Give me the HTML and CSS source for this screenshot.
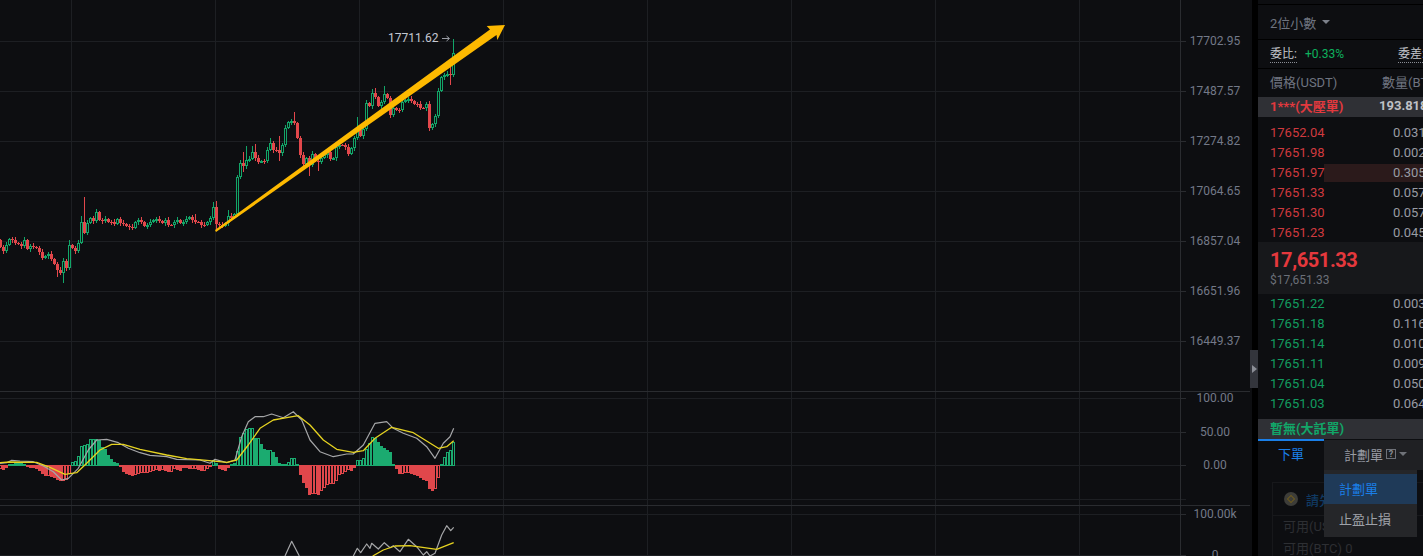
FILE: index.html
```html
<!DOCTYPE html>
<html lang="zh-Hant">
<head>
<meta charset="utf-8">
<title>BTC/USDT</title>
<link rel="stylesheet" href="styles.css">
</head>
<body>
<main class="terminal">
  <section class="chart-pane">
    <svg id="chart" class="chart" width="1252" height="556" viewBox="0 0 1252 556">
      <g id="grid"></g>
      <g id="candles"></g>
      <g id="macd"></g>
      <g id="lines"></g>
      <polygon class="trend" points="215,230 490,29.5 486.7,26 505,25 497.3,40 496.5,35 216,232"></polygon>
      <text class="peak" x="388" y="42">17711.62</text>
      <path class="peak-arrow" d="M442 38.500H449M446.500 36L449.500 38.500L446.500 41"></path>
      <g class="axis-labels">
        <text x="1215" y="45">17702.95</text>
        <text x="1215" y="95">17487.57</text>
        <text x="1215" y="145">17274.82</text>
        <text x="1215" y="195">17064.65</text>
        <text x="1215" y="245">16857.04</text>
        <text x="1215" y="295">16651.96</text>
        <text x="1215" y="345">16449.37</text>
        <text x="1215" y="402">100.00</text>
        <text x="1215" y="436">50.00</text>
        <text x="1215" y="469">0.00</text>
        <text x="1215" y="518">100.00k</text>
        <text x="1215" y="559">0</text>
      </g>
    </svg>
    <button class="collapse" type="button" aria-label="收合">
      <svg width="5" height="8" viewBox="0 0 5 8"><path class="collapse-glyph" d="M0 0L5 4L0 8Z"></path></svg>
    </button>
  </section>

  <aside class="book">
    <div class="strip"></div>
    <div class="precision">2位小數<span class="caret"></span></div>
    <div class="ratio">
      <span class="dotted">委比:</span><span class="ratio-value">+0.33%</span>
      <span class="dotted ratio-diff">委差:</span>
    </div>
    <div class="book-head"><span class="col-price">價格(USDT)</span><span class="col-qty-head">數量(BTC)</span></div>
    <div class="big-row"><span class="col-price big-ask">1***(大壓單)</span><span class="big-qty">193.8180</span></div>

    <div class="asks">
      <div class="row"><span class="col-price ask">17652.04</span><span class="col-qty">0.03120</span></div>
      <div class="row"><span class="col-price ask">17651.98</span><span class="col-qty">0.00250</span></div>
      <div class="row row-depth"><span class="col-price ask">17651.97</span><span class="col-qty">0.30540</span></div>
      <div class="row"><span class="col-price ask">17651.33</span><span class="col-qty">0.05700</span></div>
      <div class="row"><span class="col-price ask">17651.30</span><span class="col-qty">0.05710</span></div>
      <div class="row"><span class="col-price ask">17651.23</span><span class="col-qty">0.04530</span></div>
    </div>

    <div class="mid">
      <div class="mid-price">17,651.33</div>
      <div class="mid-usd">$17,651.33</div>
    </div>

    <div class="bids">
      <div class="row"><span class="col-price bid">17651.22</span><span class="col-qty">0.00310</span></div>
      <div class="row"><span class="col-price bid">17651.18</span><span class="col-qty">0.11620</span></div>
      <div class="row"><span class="col-price bid">17651.14</span><span class="col-qty">0.01000</span></div>
      <div class="row"><span class="col-price bid">17651.11</span><span class="col-qty">0.00900</span></div>
      <div class="row"><span class="col-price bid">17651.04</span><span class="col-qty">0.05000</span></div>
      <div class="row"><span class="col-price bid">17651.03</span><span class="col-qty">0.06400</span></div>
    </div>

    <div class="big-row big-row-bid"><span class="col-price big-bid">暫無(大託單)</span></div>

    <div class="order">
      <div class="tabs">
        <div class="tab tab-active">下單</div>
        <div class="tab-trigger">計劃單
          <svg class="help" width="10" height="10" viewBox="0 0 10 10"><rect class="help-box" x="0.500" y="0.500" width="9" height="9"></rect><text class="help-mark" x="5" y="8">?</text></svg>
          <span class="caret caret-small"></span>
        </div>
      </div>
      <div class="dropdown">
        <div class="dropdown-item dropdown-item-active">計劃單</div>
        <div class="dropdown-item">止盈止損</div>
      </div>
      <div class="order-card">
        <div class="card-head">
          <span class="coin"><span class="coin-inner"></span></span>
          <span class="card-link">請先登入</span>
        </div>
        <div class="card-line">可用(USDT) 0</div>
        <div class="card-line">可用(BTC) 0</div>
      </div>
    </div>
  </aside>
</main>
<script src="chart.js"></script>
</body>
</html>
```

FILE: styles.css
```css
* { box-sizing: border-box; }
html, body {
  margin: 0;
  height: 556px;
  overflow: hidden;
  background: #000;
  font-family: Roboto, "Noto Sans CJK TC", sans-serif;
}
.terminal {
  display: flex;
  gap: 6px;
  height: 556px;
  background: #000;
}

/* chart */
.chart-pane {
  position: relative;
  flex: none;
  width: 1252px;
  background: #0d0e11;
}
.chart { display: block; }
.grid-line { stroke: #1d1f23; stroke-width: 1; shape-rendering: crispEdges; }
.axis-line { stroke: #2a2c30; stroke-width: 1; shape-rendering: crispEdges; }
.axis-labels text {
  fill: #737988;
  font: 12px Roboto, sans-serif;
  text-anchor: middle;
}
.up-wick, .up-solid { fill: #12a568; shape-rendering: crispEdges; }
.down-wick, .down-solid { fill: #e2474b; shape-rendering: crispEdges; }
.up-hollow { fill: none; stroke: #12a568; stroke-width: 1; shape-rendering: crispEdges; }
.down-hollow { fill: none; stroke: #e2474b; stroke-width: 1; shape-rendering: crispEdges; }
.macd-up { fill: #1bab70; shape-rendering: crispEdges; }
.macd-down { fill: #e0474b; shape-rendering: crispEdges; }
.macd-up-hollow { fill: none; stroke: #1bab70; stroke-width: 1; shape-rendering: crispEdges; }
.macd-down-hollow { fill: none; stroke: #e0474b; stroke-width: 1; shape-rendering: crispEdges; }
.line-dif { fill: none; stroke: #a5a6a8; stroke-width: 1.200; stroke-linejoin: round; }
.line-dea { fill: none; stroke: #e6d321; stroke-width: 1.300; stroke-linejoin: round; }
.trend { fill: #fdb900; }
.peak { fill: #c4c8d2; font: 12px Roboto, sans-serif; }
.peak-arrow { fill: none; stroke: #9a9da5; stroke-width: 1; }
.collapse {
  position: absolute;
  top: 350px;
  right: -6px;
  display: flex;
  align-items: center;
  justify-content: center;
  width: 8px;
  height: 38px;
  padding: 0;
  border: 0;
  background: #33353c;
}
.collapse-glyph { fill: #8b8e96; }

/* order book */
.book {
  flex: 1;
  min-width: 0;
  overflow: hidden;
  color: #989ba3;
  font-size: 13px;
  background: #0d0e11;
}
.strip { height: 5px; border-bottom: 1px solid #000; }
.precision {
  display: flex;
  align-items: center;
  height: 35px;
  padding-left: 12px;
  border-bottom: 1px solid #000;
  color: #6f7480;
}
.caret {
  width: 0;
  height: 0;
  margin-left: 6px;
  border-top: 4px solid #7c808a;
  border-left: 4px solid transparent;
  border-right: 4px solid transparent;
}
.ratio {
  display: flex;
  align-items: center;
  height: 29px;
  padding-left: 12px;
  border-bottom: 1px solid #000;
  font-size: 12px;
  white-space: nowrap;
}
.dotted {
  color: #c4c6cc;
  line-height: 16px;
  border-bottom: 1px dotted #8a8d94;
}
.ratio-value { margin-left: 8px; color: #0eb25e; }
.ratio-diff { margin-left: 54px; }
.book-head {
  display: flex;
  align-items: center;
  height: 28px;
  padding-bottom: 3px;
  color: #6f7480;
  white-space: nowrap;
}
.col-price { flex: none; width: 124px; padding-left: 12px; white-space: nowrap; }
.col-qty-head { flex: none; }
.big-row {
  display: flex;
  align-items: center;
  height: 20px;
  padding-bottom: 3px;
  font-weight: 700;
  white-space: nowrap;
  background: #2f3035;
}
.big-ask { color: #e2393e; width: 121px; }
.big-qty { color: #bfc1c6; }
.big-row-bid { margin-top: 6px; }
.big-bid { color: #12a568; }
.asks { margin-top: 5px; }
.row {
  display: flex;
  align-items: center;
  height: 20px;
  white-space: nowrap;
}
.row-depth { position: relative; }
.row-depth::after {
  content: "";
  position: absolute;
  top: 2px;
  bottom: 0;
  left: 66px;
  right: 0;
  background: #2b1a1b;
}
.col-qty { position: relative; z-index: 1; flex: none; margin-left: 11px; }
.col-price { position: relative; z-index: 1; }
.row .col-price { width: 124px; }
.ask { color: #d03a3f; }
.bid { color: #129c60; }
.mid {
  height: 52px;
  padding: 6px 12px 0;
  background: #17181b;
  white-space: nowrap;
}
.mid-price {
  color: #e5383d;
  font-size: 20px;
  font-weight: 700;
  line-height: 25px;
  letter-spacing: -0.400px;
}
.mid-usd { color: #6b6f78; font-size: 12px; line-height: 15px; }
.bids { height: 120px; margin-top: -1px; margin-bottom: 1px; }

/* order form */
.order { position: relative; }
.tabs { display: flex; height: 31px; }
.tab {
  flex: none;
  width: 66px;
  padding: 4px 0 0 20px;
  line-height: 20px;
}
.tab-active {
  border-top: 2px solid #1a7fe8;
  color: #1a7fe8;
}
.tab-trigger {
  display: flex;
  align-items: center;
  flex: none;
  width: 99px;
  height: 30px;
  margin-top: 1px;
  padding: 0 0 2px 20px;
  background: #1f2023;
  white-space: nowrap;
}
.help { margin-left: 3px; }
.help-box { fill: none; stroke: #6e7178; }
.help-mark { fill: #8a8d94; font: 700 9px Roboto, sans-serif; text-anchor: middle; }
.caret-small { margin-left: 3px; border-top-color: #6f7278; }
.dropdown {
  position: absolute;
  top: 31px;
  left: 66px;
  z-index: 2;
  width: 93px;
  height: 67px;
  padding-top: 4px;
  background: #252629;
}
.dropdown-item {
  height: 30px;
  padding-left: 15px;
  line-height: 32px;
  color: #9ea1a8;
}
.dropdown-item-active {
  background: #1f3a58;
  color: #1a7fe8;
}
.order-card {
  width: 165px;
  height: 90px;
  margin: 12px 0 0 14px;
  border: 1px solid #17181b;
  color: #2d2f33;
  white-space: nowrap;
}
.card-head {
  display: flex;
  align-items: center;
  height: 33px;
  padding-left: 11px;
  border-bottom: 1px solid #17181b;
}
.coin {
  display: flex;
  align-items: center;
  justify-content: center;
  width: 14px;
  height: 14px;
  border-radius: 50%;
  background: #3d3d39;
}
.coin-inner {
  width: 6px;
  height: 6px;
  transform: rotate(45deg);
  border: 1px solid #6d5a1e;
}
.card-link { margin-left: 8px; color: #103a63; font-weight: 500; }
.card-line { height: 22px; padding-left: 10px; line-height: 22px; }
```

FILE: chart.js
```js
(function () {
  var NS = 'http://www.w3.org/2000/svg';
  function add(parent, tag, cls, attrs) {
    var el = document.createElementNS(NS, tag);
    el.setAttribute('class', cls);
    for (var k in attrs) el.setAttribute(k, attrs[k]);
    parent.appendChild(el);
    return el;
  }
  function line(parent, cls, x1, y1, x2, y2) {
    add(parent, 'line', cls, { x1: x1, y1: y1, x2: x2, y2: y2 });
  }

  // grid
  var grid = document.getElementById('grid');
  [71, 215, 359, 503, 647, 791, 935, 1079].forEach(function (x) {
    line(grid, 'grid-line', x + 0.5, 0, x + 0.5, 556);
  });
  [41, 91, 141, 191, 241, 291, 341, 398, 432, 465, 499, 514, 555].forEach(function (y) {
    line(grid, 'grid-line', 0, y + 0.5, 1186, y + 0.5);
  });
  line(grid, 'axis-line', 1180.5, 0, 1180.5, 556);
  line(grid, 'axis-line', 0, 391.5, 1250, 391.5);
  line(grid, 'axis-line', 0, 505.5, 1250, 505.5);
  [41, 91, 141, 191, 241, 291, 341, 398, 432, 465, 514, 555].forEach(function (y) {
    line(grid, 'axis-line', 1180, y + 0.5, 1186, y + 0.5);
  });

  // candles: closing y per 3px slot
  var closes = [247,251,245,239,240,243,244,246,240,249,246,247,248,252,258,256,254,259,264,270,273,261,268,245,248,251,243,222,233,223,218,221,212,220,221,219,222,222,224,219,223,224,226,227,228,222,220,222,226,225,222,220,219,221,223,220,225,225,222,220,223,222,219,217,220,222,222,225,225,222,218,207,224,225,226,223,216,218,214,177,163,166,160,159,152,158,162,161,161,150,143,150,150,153,145,128,122,121,123,138,155,164,158,165,154,161,162,158,155,152,159,158,147,145,145,147,154,148,138,130,136,129,103,106,93,97,106,102,94,98,115,108,110,110,102,100,99,101,104,104,108,108,104,128,124,116,91,77,75,74,75,53];
  var wicks = {
    19:[0,277],21:[258,283],23:[240,0],27:[216,0],28:[197,234],65:[214,0],71:[202,0],72:[201,229],
    76:[210,0],81:[152,172],82:[146,0],84:[146,0],85:[144,0],90:[138,0],93:[136,161],98:[112,0],
    101:[0,166],103:[0,176],106:[0,171],110:[149,0],119:[117,0],124:[89,0],125:[88,0],128:[86,0],
    130:[0,118],143:[0,131],144:[0,130],150:[62,85],151:[39,77]
  };
  var group = document.getElementById('candles');
  var open = 240;
  closes.forEach(function (close, i) {
    var top = Math.min(open, close), bottom = Math.max(open, close);
    var up = close < open;
    var x = 3 * i - 1;
    var w = wicks[i] || [0, 0];
    var high = w[0] || top - 1 - (i * 7) % 3;
    var low = w[1] || bottom + 1 + (i * 5) % 3;
    var wick = up ? 'up-wick' : 'down-wick';
    add(group, 'rect', wick, { x: x + 1, y: high, width: 1, height: Math.max(0, top - high) });
    add(group, 'rect', wick, { x: x + 1, y: bottom, width: 1, height: Math.max(0, low - bottom) });
    if (up) {
      add(group, 'rect', 'up-hollow', { x: x + 0.5, y: top + 0.5, width: 2, height: Math.max(1, bottom - top - 1) });
    } else {
      add(group, 'rect', 'down-solid', { x: x, y: top, width: 3, height: Math.max(1, bottom - top) });
    }
    open = close;
  });

  // MACD histogram, px above (+) or below (-) the zero line at y=465
  var hist = [-3,-4,-2,1,1,2,2,2,1,-1,-2,-2,-3,-5,-8,-10,-10,-11,-12,-14,-15,-15,-14,-8,3,4,9,19,20,21,26,26,26,25,18,16,10,6,3,2,-1,-6,-8,-9,-10,-9,-8,-7,-7,-7,-6,-5,-4,-5,-4,-5,-6,-6,-3,-4,-5,-2,-2,-3,-3,-3,-4,-5,-5,-3,-1,5,2,-3,-4,-5,-2,1,2,14,28,32,36,37,37,27,27,21,16,15,15,13,8,2,1,1,3,7,7,1,-9,-17,-22,-29,-28,-28,-29,-25,-22,-19,-18,-18,-15,-9,-8,-6,-4,-5,-2,5,5,7,16,22,28,27,23,19,17,15,13,1,-3,-8,-8,-7,-7,-8,-9,-10,-12,-14,-15,-23,-25,-23,-12,1,8,13,15,23];
  var macd = document.getElementById('macd');
  hist.forEach(function (v, i) {
    var prev = i ? hist[i - 1] : v;
    var x = 3 * i - 1;
    var h = Math.abs(v);
    var y = v > 0 ? 465 - h : 465;
    var pos = v > 0;
    if (v >= prev && h > 2) {
      add(macd, 'rect', pos ? 'macd-up-hollow' : 'macd-down-hollow', { x: x + 0.5, y: y + 0.5, width: 2, height: h });
    } else {
      add(macd, 'rect', pos ? 'macd-up' : 'macd-down', { x: x, y: y, width: 3, height: h + 1 });
    }
  });

  // indicator lines; points are given as x*3, y offset*3 from y=380
  function poly(cls, pts) {
    var out = [];
    for (var i = 0; i < pts.length; i += 2) {
      out.push((pts[i] / 3).toFixed(1) + ',' + (380 + pts[i + 1] / 3).toFixed(1));
    }
    add(document.getElementById('lines'), 'polyline', cls, { points: out.join(' ') });
  }
  poly('line-dif', [0,250,20,248,35,241,60,243,100,245,130,258,160,275,185,300,205,295,235,265,265,210,290,180,320,178,355,188,385,205,420,218,450,226,500,230,530,238,600,240,630,250,645,238,680,248,705,240,725,170,745,125,765,110,790,110,815,102,850,113,880,95,905,120,930,180,960,215,1000,230,1040,222,1060,222,1090,195,1125,130,1160,125,1180,145,1210,160,1250,175,1280,200,1305,235,1330,190,1350,170,1361,145]);
  poly('line-dea', [0,248,30,246,110,247,150,262,195,283,230,278,260,250,300,210,335,193,370,193,420,208,500,225,560,236,620,241,680,247,710,240,745,195,780,145,820,120,860,113,895,107,930,135,970,180,1010,208,1060,217,1090,212,1125,175,1175,142,1240,158,1275,180,1315,205,1340,200,1361,182]);
  poly('line-dif', [855,528,875,484,898,528]);
  poly('line-dif', [1060,528,1072,505,1082,518,1100,492,1110,505,1115,490,1135,507,1153,488,1170,503,1180,497,1200,515,1225,478,1250,500,1270,525,1280,515,1290,528,1305,520,1325,465,1340,437,1352,452,1361,442]);
  poly('line-dea', [1118,528,1150,510,1185,498,1230,497,1310,508,1361,488]);
})();
```
